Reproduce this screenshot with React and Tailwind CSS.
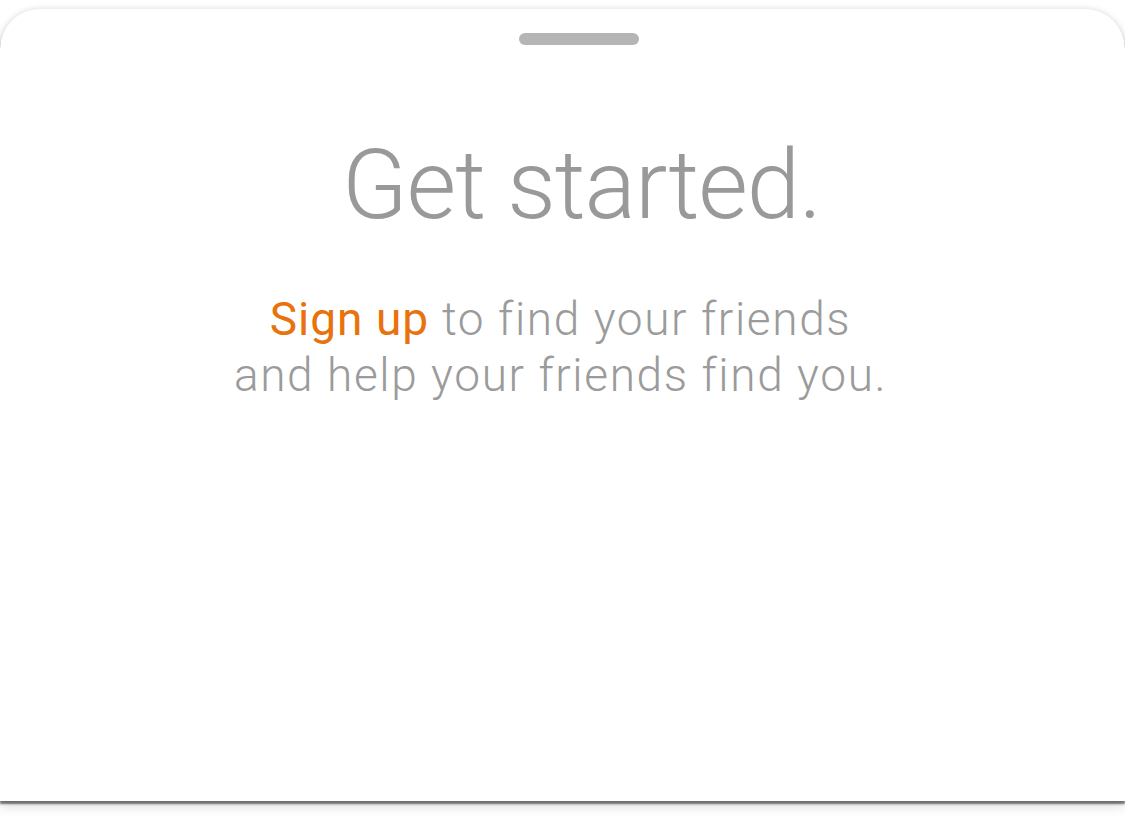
export default function App() {
  return (
    <div className="h-[822px] w-[1125px] overflow-hidden bg-white pt-[9px]">
      <div className="flex h-[792px] flex-col items-center rounded-t-[40px] bg-white shadow-[0_0_6px_rgba(0,0,0,0.12),0_3px_2px_rgba(0,0,0,0.5),0_6px_12px_rgba(0,0,0,0.12)]">
        {/* grabber */}
        <div className="ml-[33px] mt-[24px] h-[12px] w-[120px] rounded-full bg-[#b5b5b5]" />

        <h1 className="mt-[92px] pl-[38px] font-['Roboto','Liberation_Sans',sans-serif] text-[96px] font-light leading-none tracking-[-1.1px] text-[#999999]">
          Get started.
        </h1>

        <p className="mt-[58px] pr-[4px] text-center font-['Roboto','Liberation_Sans',sans-serif] text-[46px] font-light leading-[56px] tracking-[1.6px] text-[#9b9b9b]">
          <span className="font-normal tracking-[1px] text-[#e8720c]">Sign up</span> to find your friends
          <br />
          and help your friends find you.
        </p>
      </div>
    </div>
  );
}
